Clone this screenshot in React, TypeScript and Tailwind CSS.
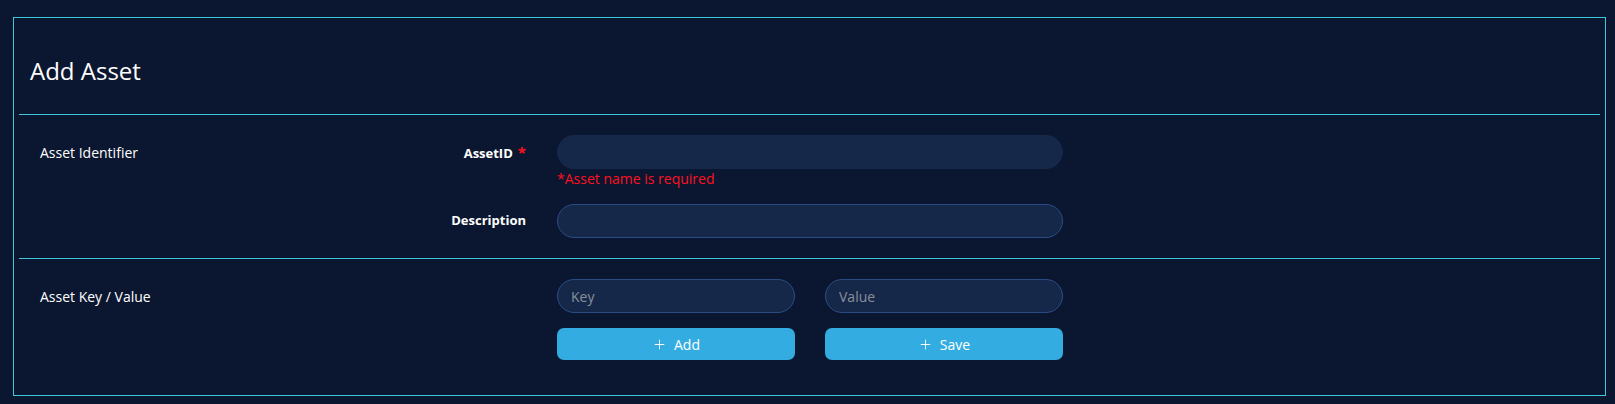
import { Plus } from "lucide-react";

const font = { fontFamily: '"Open Sans", "Noto Sans", Arial, sans-serif' };

function TextInput({ placeholder, invalid }: { placeholder?: string; invalid?: boolean }) {
  return (
    <input
      type="text"
      placeholder={placeholder}
      className={`h-[34px] w-full rounded-full border bg-[#16284a] px-[13px] text-[14px] text-white outline-none placeholder:text-[#8a8f99] ${
        invalid ? "border-[#16284a]" : "border-[#2b4b84]"
      }`}
    />
  );
}

function ActionButton({ label }: { label: string }) {
  return (
    <button
      type="button"
      className="flex h-[32px] w-full items-center justify-center gap-[7px] rounded-[7px] bg-[#33ade1] text-[14px] text-white"
    >
      <Plus size={15} strokeWidth={1.5} />
      <span>{label}</span>
    </button>
  );
}

export default function App() {
  return (
    <div className="min-h-screen bg-[#0b1730] pb-[8px] pl-[13px] pr-[9px] pt-[17px]" style={font}>
      <div className="border border-[#3ec6dc] px-[5px]">
        <div className="border-b border-[#3ec6dc] pb-[27px] pl-[11px] pt-[37px]">
          <h1 className="text-[24px] leading-[32px] text-white">Add Asset</h1>
        </div>

        <div className="grid grid-cols-[507px_506px] gap-x-[31px] border-b border-[#3ec6dc] pb-[20px] pt-[20px]">
          <div className="flex items-center justify-between">
            <span className="pl-[21px] text-[14px] text-white">Asset Identifier</span>
            <span className="text-[13px] font-bold text-white">
              AssetID<span className="ml-[5px] text-[15px] text-[#ff1020]">*</span>
            </span>
          </div>
          <TextInput invalid />
          <div />
          <p className="text-[14px] leading-[20px] text-[#ff1020]">*Asset name is required</p>
          <div className="mt-[15px] flex items-center justify-end">
            <span className="text-[13px] font-bold text-white">Description</span>
          </div>
          <div className="mt-[15px]">
            <TextInput />
          </div>
        </div>

        <div className="grid grid-cols-[507px_506px] gap-x-[31px] pb-[35px] pt-[20px]">
          <div className="flex h-[34px] items-center">
            <span className="pl-[21px] text-[14px] text-white">Asset Key / Value</span>
          </div>
          <div className="grid grid-cols-[238px_238px] gap-x-[30px] gap-y-[15px]">
            <TextInput placeholder="Key" />
            <TextInput placeholder="Value" />
            <ActionButton label="Add" />
            <ActionButton label="Save" />
          </div>
        </div>
      </div>
    </div>
  );
}
